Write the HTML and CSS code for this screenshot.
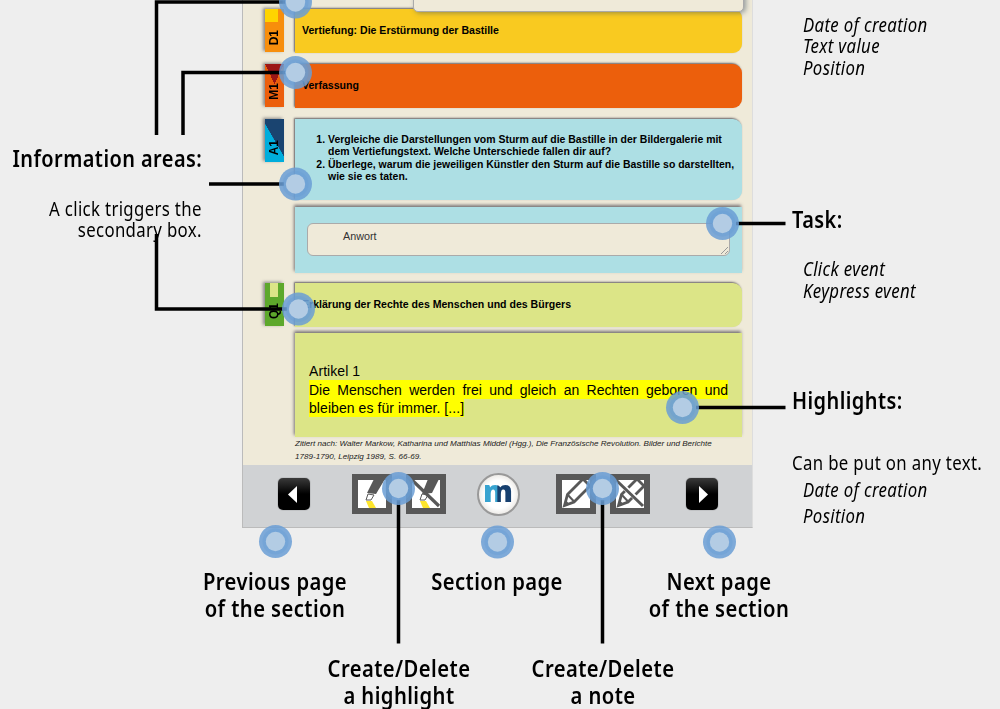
FILE: index.html
```
<!DOCTYPE html>
<html lang="en">
<head>
    <meta charset="UTF-8">
    <title>Page overview</title>
    <link rel="stylesheet" href="styles.css">
</head>
<body>
    <div class="main">
        <div class="left">
            <h2>Information areas:</h2>
            <p>A click triggers the<br>secondary box.</p>
        </div>

        <div class="book">
            <div class="note"></div>
            <div class="content">
                <div class="row">
                    <div class="tab tab-d"><span>D1</span></div>
                    <div class="card yellow">Vertiefung: Die Erstürmung der Bastille</div>
                </div>
                <div class="row">
                    <div class="tab tab-m"><span>M1</span></div>
                    <div class="card orange">Verfassung</div>
                </div>
                <div class="row">
                    <div class="tab tab-a"><span>A1</span></div>
                    <div class="card blue tasks">
                        <ol>
                            <li>Vergleiche die Darstellungen vom Sturm auf die Bastille in der Bildergalerie mit<br>dem Vertiefungstext. Welche Unterschiede fallen dir auf?</li>
                            <li>Überlege, warum die jeweiligen Künstler den Sturm auf die Bastille so darstellten,<br>wie sie es taten.</li>
                        </ol>
                    </div>
                </div>
                <div class="box blue answer">
                    <div class="field">Anwort<svg class="grip" width="7" height="7"><path d="M0 7L7 0M4 7L7 4" stroke="#999"/></svg></div>
                </div>
                <div class="row row-q">
                    <div class="tab tab-q"><span>Q1</span></div>
                    <div class="card green">Erklärung der Rechte des Menschen und des Bürgers</div>
                </div>
                <div class="box green source">
                    <div>Artikel 1</div>
                    <div class="justify"><mark>Die Menschen werden frei und gleich an Rechten geboren und</mark></div>
                    <div><mark>bleiben es für immer. [...]</mark></div>
                </div>
                <div class="cite">Zitiert nach: Walter Markow, Katharina und Matthias Middel (Hgg.), Die Französische Revolution. Bilder und Berichte<br>1789-1790, Leipzig 1989, S. 66-69.</div>
            </div>
            <div class="toolbar">
                <div class="nav"><svg width="32" height="32"><path d="M19 8v17l-9-8.500z" fill="#fff"/></svg></div>
                <div class="pair pair-left">
                    <svg width="40" height="40" viewBox="0 0 40 40">
                        <path fill="#585858" d="M0 0h40v40H0z"/><path fill="#fff" d="M6 6h28v28H6z"/>
                        <path fill="#fee52c" d="M14 27h6l4 7h-7z"/>
                        <path fill="#585858" d="M22 5h11l-9 15-9-1z"/>
                        <path fill="#fff" stroke="#585858" d="M16 20l6 1-3 5h-5z"/>
                    </svg>
                    <svg width="40" height="40" viewBox="0 0 40 40">
                        <path fill="#585858" d="M0 0h40v40H0z"/><path fill="#fff" d="M6 6h28v28H6z"/>
                        <path fill="#fee52c" d="M14 27h6l4 7h-7z"/>
                        <path fill="#585858" d="M22 5h11l-7 14-10 1z"/>
                        <path fill="#fff" stroke="#585858" d="M16 20l6 1-3 5h-5z"/>
                        <path stroke="#585858" stroke-width="3.200" d="M6 6l27 26"/>
                    </svg>
                </div>
                <div class="logo"><span class="m">m</span></div>
                <div class="pair">
                    <svg width="40" height="40" viewBox="0 0 40 40">
                        <path fill="#585858" d="M0 0h40v40H0z"/><path fill="#fff" d="M6 6h28v28H6z"/>
                        <path fill="#fff" stroke="#585858" stroke-width="2.800" d="M8.500 31.500l3-11L27 5l7 7-16 16z"/>
                        <path fill="none" stroke="#585858" stroke-width="2" d="M11.500 20.500l7 7.500"/>
                        <path fill="#585858" d="M8 32l1.500-6 4.500 4.500z"/>
                    </svg>
                    <svg width="40" height="40" viewBox="0 0 40 40">
                        <path fill="#585858" d="M0 0h40v40H0z"/><path fill="#fff" d="M6 6h28v28H6z"/>
                        <path fill="#fff" stroke="#585858" stroke-width="2.800" d="M8.500 31.500l3-11L27 5l7 7-16 16z"/>
                        <path fill="none" stroke="#585858" stroke-width="2" d="M11.500 20.500l7 7.500"/>
                        <path fill="#585858" d="M8 32l1.500-6 4.500 4.500z"/>
                        <path stroke="#fff" stroke-width="5" d="M12 11l19 18"/>
                        <path stroke="#585858" stroke-width="3" d="M6 6l27 26"/>
                    </svg>
                </div>
                <div class="nav"><svg width="32" height="32"><path d="M13 8v17l9-8.500z" fill="#fff"/></svg></div>
            </div>
        </div>

        <div class="right">
            <p class="sub first">Date of creation<br>Text value<br>Position</p>
            <h2 class="task">Task:</h2>
            <p class="sub">Click event<br>Keypress event</p>
            <h2 class="high">Highlights:</h2>
            <p class="wide">Can be put on any text.</p>
            <p class="sub loose">Date of creation<br>Position</p>
        </div>
    </div>

    <div class="labels three">
        <h2>Previous page<br>of the section</h2>
        <h2>Section page</h2>
        <h2>Next page<br>of the section</h2>
    </div>
    <div class="labels two">
        <h2>Create/Delete<br>a highlight</h2>
        <h2>Create/Delete<br>a note</h2>
    </div>

    <!-- pointer lines and dots over the page -->
    <svg class="pointers" width="1000" height="709">
        <defs>
            <g id="dot">
                <circle r="16.500" fill="#6a9dd5" fill-opacity=".85"/>
                <circle r="13" fill="#6a9dd5" fill-opacity=".4"/>
                <circle r="9.700" fill="#b3cce4"/>
            </g>
        </defs>
        <path class="line" d="M156.500 135V2H285M183 135V72.500H285M209 184H284M156.500 234V309H287M736 223.500H785.500M696 407.500H785.500M398.500 500V643.500M602.500 500V643.500"/>
        <use href="#dot" x="295.500" y="2"/>
        <use href="#dot" x="295.500" y="72.500"/>
        <use href="#dot" x="295.500" y="184"/>
        <use href="#dot" x="298.500" y="309"/>
        <use href="#dot" x="722.500" y="223.500"/>
        <use href="#dot" x="682.500" y="407.500"/>
        <use href="#dot" x="398.500" y="488.500"/>
        <use href="#dot" x="602.500" y="488.500"/>
        <use href="#dot" x="275.500" y="541.500"/>
        <use href="#dot" x="497.500" y="542"/>
        <use href="#dot" x="719.500" y="542"/>
    </svg>
</body>
</html>
```
FILE: styles.css
```
* { box-sizing: border-box; }
body { margin: 0; width: 1000px; height: 709px; overflow: hidden; position: relative; background: #eee; color: #000; font-family: "Noto Sans", sans-serif; }
h2, p { margin: 0; transform-origin: left; }
h2 { font-size: 23.5px; font-weight: 600; line-height: 26.5px; letter-spacing: 0.5px; transform: scaleX(0.85); }
p { font-size: 20px; line-height: 21.3px; letter-spacing: 0.4px; transform: scaleX(0.84); }

.main { display: grid; grid-template-columns: 242px 511px 247px; grid-template-rows: 528px; }
.left { padding: 145px 40px 0 0; white-space: nowrap; display: flex; flex-direction: column; align-items: flex-end; text-align: right; }
.left h2, .left p { transform-origin: right; }
.left p { margin-top: 26px; }

.right { padding-left: 39px; white-space: nowrap; }
.right .sub { margin-left: 11px; font-style: italic; }
.right .first { padding-top: 14px; }
.right .task { margin-top: 128px; }
.right .task + p { margin-top: 26px; }
.right .high { margin-top: 86px; }
.right .wide { margin-top: 37px; line-height: 26.5px; }
.right .loose { line-height: 26.5px; }

.book { position: relative; display: flex; flex-direction: column; border: 1px solid #bbb; border-top: 0; border-right-color: #ddd; background: #efead9; font-family: "Liberation Sans", Arial, sans-serif; }
.note { position: absolute; left: 170px; top: -20px; width: 331px; height: 32px; z-index: 2; background: #efead9; border: 1px solid #aaa; border-radius: 5px; box-shadow: 2px 1px 5px rgba(60,80,100,0.5); }
.content { flex: 1; padding: 9px 10px 0 22px; }
.row { display: flex; gap: 11px; margin-bottom: 11px; }
.card { flex: 1; min-width: 0; min-height: 44px; padding: 0 7px 3px; display: flex; align-items: center; border-radius: 0 9px 9px 0; font-size: 10.560px; font-weight: bold; box-shadow: -1px -1px 2px rgba(70,65,75,0.8); }
.yellow { background: #f9ca20; }
.orange { background: #ec5f0c; }
.blue { background: #addfe4; }
.green { background: #dce587; }

.tab { width: 19px; height: 43px; display: flex; align-items: flex-end; justify-content: center; padding-bottom: 7px; font-size: 12px; font-weight: bold; box-shadow: -2px -1px 3px rgba(70,70,80,0.6); }
.tab span { writing-mode: vertical-rl; transform: rotate(180deg); line-height: 19px; }
.tab-d { background: linear-gradient(#ffd400, #ffd400) 0 0 / 13px 13px no-repeat, #f78e0c; }
.tab-m { background: conic-gradient(from -25deg at 50% 20px, #9c1616 50deg, #ec5f0c 0); }
.tab-a { background: linear-gradient(60deg, #00addc 50%, #1a4470 51%); }
.tab-q { background: linear-gradient(#dce587, #dce587) 5px 0 / 8px 14px no-repeat, #5da82b; }

.tasks { min-height: 81px; align-items: flex-start; padding-top: 14.500px; font-size: 10.480px; }
ol { margin: 0; padding-left: 26px; line-height: 12.600px; white-space: nowrap; }
.row:has(.tasks) { margin-bottom: 7px; }
.box { margin-left: 30px; box-shadow: -1px -2px 3px rgba(70,65,75,0.7); }
.answer { height: 66px; padding: 16px 12px 0 12px; margin-bottom: 10px; }
.field { position: relative; height: 33px; padding: 6px 35px; border: 1px solid #aaa; border-radius: 6px; background: #efead9; color: #333; font-size: 10.800px; line-height: 13px; }
.grip { position: absolute; right: 1px; bottom: 1px; }
.row-q { margin-bottom: 6px; }
.source { height: 104px; padding: 29px 14px 0; font-size: 14px; line-height: 18.600px; }
.source div:not(.justify) { letter-spacing: 0.070px; }
.justify { text-align-last: justify; }
mark { background: #ff0; padding: 2px 0 1px; }
.cite { margin-left: 30px; font-size: 8.100px; font-style: italic; line-height: 12.500px; color: #222; white-space: nowrap; padding-top: 1px; }

.toolbar { height: 62px; padding: 0 34px 4px 35px; display: flex; align-items: center; justify-content: space-between; background: #d0d2d4; }
.nav { width: 32px; height: 32px; border-radius: 5px; background: linear-gradient(#3a3a3a, #000 50%); box-shadow: 0 0 1px #333; }
.pair { display: flex; gap: 14px; }
.pair-left { position: relative; left: 6px; }
.pair svg, .nav svg { display: block; }
.logo { width: 43px; height: 43px; border: 2px solid #999; border-radius: 50%; background: radial-gradient(#fff 50%, #d5d0c8); display: flex; align-items: center; justify-content: center; }
.m { font: 800 30px/33px "Open Sans", sans-serif; margin-top: -7px; background: linear-gradient(90deg, #38a3d0 45%, #17406f 50%); -webkit-background-clip: text; color: transparent; }

.labels { display: grid; text-align: center; white-space: nowrap; }
.labels h2 { transform: scaleX(0.86); transform-origin: center; }
.three { grid-template-columns: repeat(3, 222px); margin: 40px 0 0 164px; height: 87px; }
.two { grid-template-columns: repeat(2, 204px); margin-left: 297px; }

.pointers { position: absolute; left: 0; top: 0; z-index: 5; }
.line { fill: none; stroke: #000; stroke-width: 3.500; }
```
